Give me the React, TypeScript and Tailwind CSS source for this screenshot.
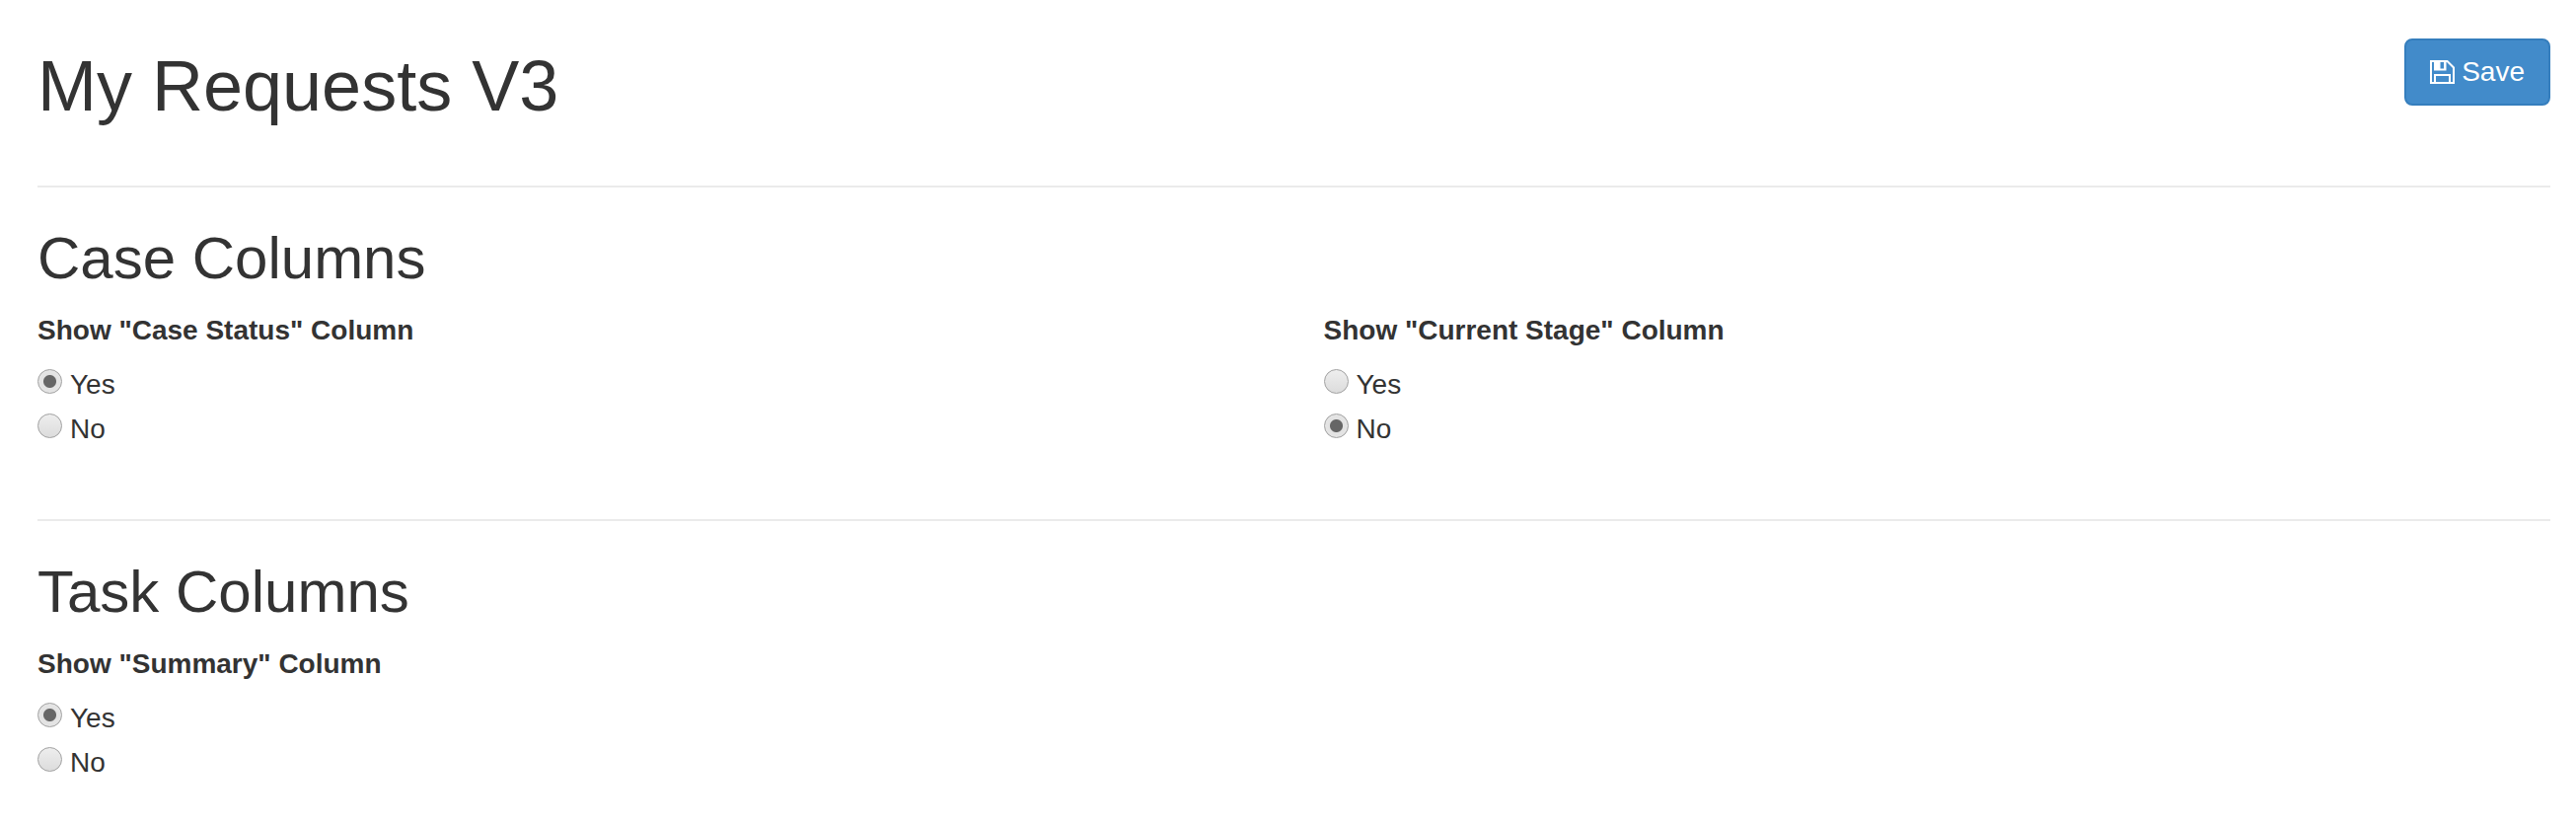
import { useState } from "react";

type Choice = "yes" | "no";

interface ColumnOption {
  id: string;
  label: string;
  initial: Choice;
}

const caseColumns: ColumnOption[] = [
  { id: "case-status", label: 'Show "Case Status" Column', initial: "yes" },
  { id: "current-stage", label: 'Show "Current Stage" Column', initial: "no" },
];

const taskColumns: ColumnOption[] = [
  { id: "summary", label: 'Show "Summary" Column', initial: "yes" },
];

function SaveIcon() {
  return (
    <svg width="25" height="24" viewBox="0 0 25 24" fill="none" aria-hidden="true">
      <path d="M1 1H17.5L24 7.5V23H1Z" stroke="currentColor" strokeWidth="2" />
      <path d="M4 1H16.5V10.5H4Z M10.5 2V8.5H14V2Z" fill="currentColor" fillRule="evenodd" />
      <path d="M5 23V15H20V23" stroke="currentColor" strokeWidth="2" />
    </svg>
  );
}

function RadioOption({ name, value, text, checked, onChange }: {
  name: string;
  value: Choice;
  text: string;
  checked: boolean;
  onChange: (value: Choice) => void;
}) {
  return (
    <label className="flex items-start gap-2 cursor-pointer">
      <input
        type="radio"
        name={name}
        value={value}
        checked={checked}
        onChange={() => onChange(value)}
        className="appearance-none mt-1 size-[25px] shrink-0 rounded-full border border-[#a0a0a0] bg-linear-to-b from-[#eeeeee] to-[#dcdcdc] checked:bg-[radial-gradient(circle,#666_0_6px,#e2e2e2_7px,#e8e8e8_100%)]"
      />
      <span>{text}</span>
    </label>
  );
}

function YesNoField({ id, label, initial }: ColumnOption) {
  const [value, setValue] = useState<Choice>(initial);

  return (
    <fieldset>
      <legend className="font-bold">{label}</legend>
      <div className="mt-[15px] flex flex-col items-start gap-[5px]">
        <RadioOption name={id} value="yes" text="Yes" checked={value === "yes"} onChange={setValue} />
        <RadioOption name={id} value="no" text="No" checked={value === "no"} onChange={setValue} />
      </div>
    </fieldset>
  );
}

function ColumnSection({ title, options }: { title: string; options: ColumnOption[] }) {
  return (
    <section className="border-t-2 border-[#ebebeb] pt-[39px] pb-[71px] last:pb-10">
      <h2 className="mb-5 text-[60px] leading-[66px]">{title}</h2>
      <div className="grid grid-cols-2 gap-x-15">
        {options.map((option) => (
          <YesNoField key={option.id} {...option} />
        ))}
      </div>
    </section>
  );
}

export default function App() {
  return (
    <main className="bg-white pl-[38px] pr-[26px] font-['Liberation_Sans',Arial,sans-serif] text-[28px] leading-10 text-[#333333]">
      <header className="flex items-start justify-between pt-[39px] pb-[61px]">
        <h1 className="mt-2 text-[72px] leading-20">My Requests V3</h1>
        <button
          type="button"
          className="flex items-center gap-[7px] rounded-lg border-2 border-[#357ebd] bg-[#428bca] px-6 py-3 text-white cursor-pointer hover:bg-[#3276b1]"
        >
          <SaveIcon />
          Save
        </button>
      </header>
      <ColumnSection title="Case Columns" options={caseColumns} />
      <ColumnSection title="Task Columns" options={taskColumns} />
    </main>
  );
}
